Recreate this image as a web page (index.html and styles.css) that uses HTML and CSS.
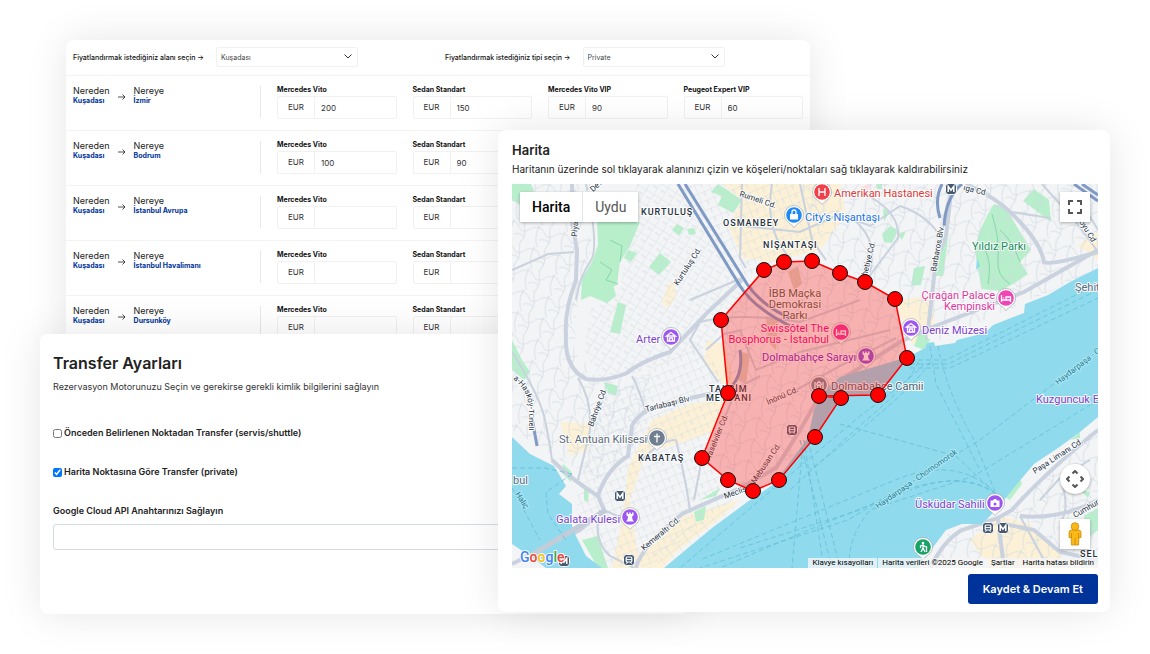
FILE: index.html
```html
<!DOCTYPE html>
<html lang="tr">
<head>
    <meta charset="UTF-8">
    <meta name="viewport" content="width=device-width, initial-scale=1.0">
    <title>Transfer Ayarları</title>
    <link rel="stylesheet" href="styles.css">
</head>
<body>
    <main class="stage">

        <!-- Prices -->
        <section class="panel prices">
            <div class="filters">
                <div class="filter">
                    <label for="area">Fiyatlandırmak istediğiniz alanı seçin →</label>
                    <div class="select-wrap">
                        <select id="area"><option>Kuşadası</option></select>
                        <svg class="chevron" viewBox="0 0 8 5"><path d="M.5 .5 4 4 7.5 .5"/></svg>
                    </div>
                </div>
                <div class="filter">
                    <label for="type">Fiyatlandırmak istediğiniz tipi seçin →</label>
                    <div class="select-wrap">
                        <select id="type"><option>Private</option></select>
                        <svg class="chevron" viewBox="0 0 8 5"><path d="M.5 .5 4 4 7.5 .5"/></svg>
                    </div>
                </div>
            </div>

            <div class="price-row">
                <div class="route">
                    <div class="stop">Nereden<b>Kuşadası</b></div>
                    <svg class="arrow" viewBox="0 0 8 6"><path d="M0 3H7M4.500 .5 7 3 4.500 5.500"/></svg>
                    <div class="stop">Nereye<b>İzmir</b></div>
                </div>
                <div class="cars">
                    <div class="car"><label for="p11">Mercedes Vito</label><div class="money"><span>EUR</span><input id="p11" type="text" value="200"></div></div>
                    <div class="car"><label for="p12">Sedan Standart</label><div class="money"><span>EUR</span><input id="p12" type="text" value="150"></div></div>
                    <div class="car"><label for="p13">Mercedes Vito VIP</label><div class="money"><span>EUR</span><input id="p13" type="text" value="90"></div></div>
                    <div class="car"><label for="p14">Peugeot Expert VIP</label><div class="money"><span>EUR</span><input id="p14" type="text" value="60"></div></div>
                </div>
            </div>

            <div class="price-row">
                <div class="route">
                    <div class="stop">Nereden<b>Kuşadası</b></div>
                    <svg class="arrow" viewBox="0 0 8 6"><path d="M0 3H7M4.500 .5 7 3 4.500 5.500"/></svg>
                    <div class="stop">Nereye<b>Bodrum</b></div>
                </div>
                <div class="cars">
                    <div class="car"><label for="p21">Mercedes Vito</label><div class="money"><span>EUR</span><input id="p21" type="text" value="100"></div></div>
                    <div class="car"><label for="p22">Sedan Standart</label><div class="money"><span>EUR</span><input id="p22" type="text" value="90"></div></div>
                </div>
            </div>

            <div class="price-row">
                <div class="route">
                    <div class="stop">Nereden<b>Kuşadası</b></div>
                    <svg class="arrow" viewBox="0 0 8 6"><path d="M0 3H7M4.500 .5 7 3 4.500 5.500"/></svg>
                    <div class="stop">Nereye<b>İstanbul Avrupa</b></div>
                </div>
                <div class="cars">
                    <div class="car"><label for="p31">Mercedes Vito</label><div class="money"><span>EUR</span><input id="p31" type="text"></div></div>
                    <div class="car"><label for="p32">Sedan Standart</label><div class="money"><span>EUR</span><input id="p32" type="text"></div></div>
                </div>
            </div>

            <div class="price-row">
                <div class="route">
                    <div class="stop">Nereden<b>Kuşadası</b></div>
                    <svg class="arrow" viewBox="0 0 8 6"><path d="M0 3H7M4.500 .5 7 3 4.500 5.500"/></svg>
                    <div class="stop">Nereye<b>İstanbul Havalimanı</b></div>
                </div>
                <div class="cars">
                    <div class="car"><label for="p41">Mercedes Vito</label><div class="money"><span>EUR</span><input id="p41" type="text"></div></div>
                    <div class="car"><label for="p42">Sedan Standart</label><div class="money"><span>EUR</span><input id="p42" type="text"></div></div>
                </div>
            </div>

            <div class="price-row">
                <div class="route">
                    <div class="stop">Nereden<b>Kuşadası</b></div>
                    <svg class="arrow" viewBox="0 0 8 6"><path d="M0 3H7M4.500 .5 7 3 4.500 5.500"/></svg>
                    <div class="stop">Nereye<b>Dursunköy</b></div>
                </div>
                <div class="cars">
                    <div class="car"><label for="p51">Mercedes Vito</label><div class="money"><span>EUR</span><input id="p51" type="text"></div></div>
                    <div class="car"><label for="p52">Sedan Standart</label><div class="money"><span>EUR</span><input id="p52" type="text"></div></div>
                </div>
            </div>
        </section>

        <!-- Transfer settings -->
        <section class="panel settings">
            <h1>Transfer Ayarları</h1>
            <p>Rezervasyon Motorunuzu Seçin ve gerekirse gerekli kimlik bilgilerini sağlayın</p>
            <div class="check">
                <input type="checkbox" id="shuttle">
                <label for="shuttle">Önceden Belirlenen Noktadan Transfer (servis/shuttle)</label>
            </div>
            <div class="check">
                <input type="checkbox" id="private" checked>
                <label for="private">Harita Noktasına Göre Transfer (private)</label>
            </div>
            <label class="key-label" for="api-key">Google Cloud API Anahtarınızı Sağlayın</label>
            <input class="key-input" type="text" id="api-key">
        </section>

        <!-- Map -->
        <section class="panel map-panel">
            <h2>Harita</h2>
            <p>Haritanın üzerinde sol tıklayarak alanınızı çizin ve köşeleri/noktaları sağ tıklayarak kaldırabilirsiniz</p>

            <div class="map">
                <svg class="map-canvas" viewBox="512 184 586 384">
                    <defs>
                        <pattern id="grid-a" width="9" height="13" patternUnits="userSpaceOnUse" patternTransform="rotate(32)"><path class="street" d="M0 0H9M0 0V13M4 6H9"/></pattern>
                        <pattern id="grid-b" width="14" height="9" patternUnits="userSpaceOnUse" patternTransform="rotate(-22)"><path class="street" d="M0 0H14M0 0V9M7 0V5"/></pattern>
                        <pattern id="grid-c" width="26" height="22" patternUnits="userSpaceOnUse" patternTransform="rotate(14)"><path class="street" d="M0 4Q9 0 13 7T26 4M6 2Q3 12 9 22M6 0V3M18 6Q22 13 17 22M17 0 18 6M9 15Q14 11 20 15"/></pattern>
                        <pattern id="grid-d" width="11" height="8" patternUnits="userSpaceOnUse" patternTransform="rotate(-38)"><path class="street" d="M0 0H11M0 0V8"/></pattern>
                        <symbol id="pin" viewBox="-11 -11 22 26" overflow="visible">
                            <path d="M0 12.500C-2 9-9.500 7-9.500 0A9.500 9.500 0 0 1 9.500 0C9.500 7 2 9 0 12.500Z" fill="#fff" stroke="#9aa0a6" stroke-width=".6"/>
                            <circle r="7.800" fill="currentColor"/>
                        </symbol>
                        <symbol id="metro" viewBox="-6 -6 12 12" overflow="visible">
                            <rect x="-5.500" y="-5.500" width="11" height="11" rx="3" fill="#455a70" stroke="#fff"/>
                            <path d="M-2.800 3V-2.600L0 1.200 2.800-2.600V3" fill="none" stroke="#fff" stroke-width="1.500"/>
                        </symbol>
                        <symbol id="tram" viewBox="-6 -6 12 12" overflow="visible">
                            <rect x="-5.500" y="-5.500" width="11" height="11" rx="3" fill="#455a70" stroke="#fff"/>
                            <rect x="-2.800" y="-3" width="5.600" height="5" rx="1" fill="none" stroke="#fff" stroke-width="1.200"/>
                            <path d="M-2.800-.4H2.800M-2.500 3.800-1.500 2M2.500 3.800 1.500 2" stroke="#fff"/>
                        </symbol>
                        <path id="tunnel" d="M513 379Q528 390 529 409V442"/>
                    </defs>

                    <!-- land -->
                    <rect x="512" y="184" width="586" height="384" fill="#f3f4f5"/>
                    <g fill="#fcf1d6">
                        <path d="M722 184H840L846 214 820 250 772 262 742 258 728 226 742 200Z"/>
                        <path d="M668 284 674 282 676 296 669 308 662 304Z"/>
                        <path d="M707 340 724 344 734 380 728 390 704 362Z"/>
                        <path d="M652 420 690 404 728 398 712 432 676 444 646 452 630 500 640 568H612L622 520 628 468Z"/>
                        <path d="M560 422 592 424 588 450 570 456Z"/>
                        <path d="M640 552 684 516 740 500 720 518 676 552 662 568H636Z"/>
                        <path d="M895 300 930 296 936 330 912 345Z"/>
                        <path d="M970 540 1000 516 1030 524 1062 556 1058 568H990Z"/>
                        <path d="M1078 245 1098 232V260Z"/>
                    </g>
                    <g fill="#b7efcb">
                        <path d="M512 184H531L534 192 522 206 512 200Z"/>
                        <path d="M597 222H640L630 246 620 262 617 285 600 292 581 300 582 278 592 262 598 245Z"/>
                        <path d="M582 280H612L616 296 607 303 590 296Z"/>
                        <path d="M618 302 626 305 620 334 610 332Z"/>
                        <path d="M660 253 671 262 659 275 649 267Z"/>
                        <path d="M677 224 684 228 679 236 672 230ZM687 229 694 228 696 234 689 235Z"/>
                        <path d="M718 184 742 200 733 213 718 205 722 196 711 192Z"/>
                        <path d="M628 250 637 253 631 262 624 258Z"/>
                        <path d="M994 204 1004 207 1013 220 1023 237 1031 250 1020 262 1028 274 1013 284 1000 291 982 289 978 270 975 250 979 232 988 214Z"/>
                        <path d="M1034 189 1049 200 1051 222 1023 201Z"/>
                        <path d="M882 234 890 226 898 230 892 243 884 242ZM898 234 906 231 902 240Z"/>
                        <path d="M938 240 948 238 943 276 934 276ZM914 268 925 266 921 285 911 286Z"/>
                        <path d="M876 184H882V189H877ZM883 208 889 212 884 222Z"/>
                        <path d="M512 340 522 360 530 372 524 380 512 370Z"/>
                        <path d="M604 382 618 386 616 396 606 392Z"/>
                        <path d="M563 464 572 472 571 482 561 472Z"/>
                        <path d="M584 488H589L588 502 584 500Z"/>
                        <path d="M582 540 598 536 604 556 608 568H598Z"/>
                        <path d="M694 512 706 506 704 520 696 522ZM700 500 720 488 716 496Z"/>
                        <path d="M920 330 930 340 924 350 914 346Z"/>
                        <path d="M1005 497 1020 478 1022 484 1010 500ZM1084 516 1098 508V530L1088 538Z"/>
                        <path d="M1070 440 1080 432V438ZM1080 490 1090 492 1088 498Z"/>
                    </g>
                    <g fill="#dcd3bd">
                        <path d="M788 272 798 266 802 284 794 290ZM766 316 778 320 776 350 768 342ZM742 352 750 354 746 384 738 380Z"/>
                    </g>
                    <path d="M664 568 690 546 712 534 706 546 684 560ZM872 184H868L860 188 866 192Z" fill="#fbdfe0"/>

                    <!-- side streets -->
                    <path fill="url(#grid-c)" d="M512 184H590L592 260 578 300 574 350 600 382 650 374 640 440 600 480 560 460 512 430ZM800 184H1098V270L940 340 900 300 870 280 830 260ZM930 568 950 530 1000 516 1098 425V568Z"/>
                    <path fill="url(#grid-a)" d="M636 184H690L752 300 700 350 640 372 600 378 584 350 590 310 620 290Z"/>
                    <path fill="url(#grid-b)" d="M690 184H830L820 250 760 268 742 280Z"/>
                    <path fill="url(#grid-b)" d="M600 400 700 340 730 390 700 456 740 494 650 566H600L576 510 580 470Z"/>
                    <path fill="url(#grid-d)" d="M648 560 690 526 744 500 700 540 664 566Z"/>
                    <path fill="url(#grid-c)" d="M764 270 812 261 865 282 895 299 907 358 840 378 815 400 800 450 753 491 702 458 728 393 721 320Z"/>
                    <path class="park-path" d="M600 262 612 270 606 280 618 284M610 240 622 246 620 262M992 214Q1000 240 998 258T1010 284M985 250Q992 262 988 284M1000 230Q1012 240 1020 262"/>

                    <!-- main roads -->
                    <g class="road">
                        <path class="wide" d="M572 184V222L577 250 576 280Q564 312 566 335 564 368 586 379 606 382 627 373 640 362 670 352L707 313 742 280"/>
                        <path d="M586 184Q600 250 590 262 580 276 576 300M512 270 548 254 574 252M512 352Q540 396 545 420T552 460M578 378Q592 400 590 430L578 480"/>
                        <path class="wide" d="M552 460Q572 480 598 496L604 510 580 530 512 564M598 496Q606 470 628 456L632 426Q638 412 660 406L690 398 728 390"/>
                        <path d="M640 462Q660 440 676 440M632 376Q640 390 646 414M600 510Q592 540 610 556L634 568M604 510 626 520"/>
                        <path class="wide" d="M636 568Q640 548 682 514L740 488 776 468 800 430 822 392 900 342 930 328 1024 292 1098 250"/>
                        <path d="M700 322 690 340 718 382M706 350 724 334 742 330M742 184 740 258 746 268M690 300 742 278"/>
                        <path d="M772 184Q764 230 790 258M742 226 800 232 840 214 870 226 900 206M800 184 812 240 826 260"/>
                        <path d="M846 214Q880 236 870 272M872 198Q900 214 898 238L868 278M900 206Q930 216 942 240L934 276 926 340"/>
                        <path class="wide" d="M952 184 946 236 936 260 928 330M966 184Q996 198 1010 212 1040 240 1044 262 1050 266 1098 252"/>
                        <path d="M1042 184 1076 222 1098 252M1030 320 1098 296M1080 200 1098 230M1012 212 1050 218"/>
                        <path class="wide" d="M1098 430Q1044 474 1012 510L998 518 962 530Q944 540 930 568"/>
                        <path class="wide" d="M998 518 1004 568M1004 524 1034 530 1060 552 1098 560M1020 516Q1060 520 1098 500"/>
                        <path d="M1040 500 1060 478 1090 460M1020 516 1044 560M1060 478Q1070 506 1062 520"/>
                        <path d="M700 322Q740 312 800 322L860 300M740 330 756 370 800 352 890 330M770 404Q800 388 840 366L896 338M728 393 760 376M732 400Q720 430 706 456M676 440Q688 490 690 512M702 458 694 500"/>
                    </g>
                    <g class="highway">
                        <path d="M678 184 740 286Q754 308 790 326M685 184 747 284Q762 306 790 318"/>
                        <path d="M942 184Q934 200 940 218M962 184Q946 196 944 226"/>
                        <path d="M1074 184 1098 201M1082 184 1098 195M532 418 537 446M728 390Q744 376 740 350"/>
                    </g>

                    <!-- water -->
                    <g class="water">
                        <path d="M1098 268 1070 282 1048 295 1025 304 1024 313 993 325 985 333 957 340 955 343 935 346 934 342 927 343 925 348 908 357 840 377 824 392 814 410 808 438 790 462 774 484 750 500 712 528 664 568H918L934 546 946 530 962 524 982 524 998 508 1012 490 1034 464 1058 448 1080 432 1098 417Z"/>
                        <path d="M512 437 530 454 554 466 566 486 559 494 572 504 572 526 576 536 586 556 602 568H546L530 556 512 544Z"/>
                        <path d="M977 258 980 266 976 270Z"/>
                    </g>
                    <path d="M530 556 606 510" stroke="#c3cdda" stroke-width="5"/>
                    <g class="ferry">
                        <path d="M910 360H946L1098 284M910 364H948L1098 290M910 368H950L1098 298M930 346 936 384 980 470M938 346Q946 390 974 440L996 494"/>
                        <path d="M924 364Q910 380 860 416L760 500 680 568M918 362Q910 384 866 420L790 490M930 362Q916 388 810 470"/>
                        <path d="M800 440 830 560M804 440 824 568M808 440 840 568M802 454 792 568M840 424 956 456 996 494M1098 350 980 440 848 520 700 568"/>
                        <path d="M996 494Q960 456 900 478L700 560M996 494Q970 474 930 484T720 568M996 494Q950 462 860 510L740 548M1098 400 974 476 870 510Q846 540 850 568"/>
                        <path d="M512 468H545L572 474M572 474 546 492 548 514 566 540M512 488 540 540"/>
                    </g>

                    <!-- street names -->
                    <g class="road-name">
                        <text transform="translate(739 196) rotate(19)">Rumeli Cd.</text>
                        <text transform="translate(577 237) rotate(-86)">Piyale</text>
                        <text transform="translate(582 202) rotate(-42)">Civ. Devri</text>
                        <text transform="translate(678 286) rotate(-57)">Kurtuluş Cd.</text>
                        <text transform="translate(936 272) rotate(-80)">Barbaros Blv.</text>
                        <text transform="translate(867 276) rotate(-76)">hetiye Cd.</text>
                        <text transform="translate(963 190) rotate(13)">ıga Cd.</text>
                        <text transform="translate(1079 222) rotate(58)">oyu Cd</text>
                        <text transform="translate(646 412) rotate(-14)">Tarlabaşı Blv</text>
                        <text transform="translate(593 427) rotate(-70)">Bahriye Cd.</text>
                        <text transform="translate(768 405) rotate(-24)">İnönü Cd.</text>
                        <text transform="translate(711 458) rotate(-68)">raselviler Cd.</text>
                        <text transform="translate(725 499) rotate(-20)">Meclis</text>
                        <text transform="translate(755 484) rotate(-56)">Mebusan Cd.</text>
                        <text transform="translate(644 551) rotate(-40)">Kemeraltı Cd.</text>
                        <text transform="translate(1035 474) rotate(-33)">Paşa Limanı Cd.</text>
                        <text transform="translate(1075 518) rotate(-30)">Cumhur</text>
                        <text><textPath href="#tunnel">a-Hasköy-Tüneli</textPath></text>
                    </g>
                    <g class="sea-name">
                        <text transform="translate(878 509) rotate(-35)">Haydarpaşa - Chornomorsk</text>
                        <text transform="translate(1058 385) rotate(-38)">Haydarpaşa - C</text>
                        <text transform="translate(515 494) rotate(58)">Haliç</text>
                    </g>

                    <!-- districts -->
                    <g class="district">
                        <text x="641" y="215">KURTULUŞ</text>
                        <text x="723" y="226">OSMANBEY</text>
                        <text x="763" y="248">NİŞANTAŞI</text>
                        <text x="638" y="461">KABATAŞ</text>
                        <text x="709" y="392">TAKSİM</text>
                        <text x="706" y="401">MEYDANI</text>
                        <text x="1080" y="557">SEL</text>
                    </g>

                    <!-- places -->
                    <g class="place">
                        <text x="834" y="197" fill="#d93a3a">Amerikan Hastanesi</text>
                        <text x="805" y="221" fill="#1a73e8">City's Nişantaşı</text>
                        <text x="972" y="250" fill="#178a5b">Yıldız Parkı</text>
                        <text x="636" y="343" fill="#7b3fd0">Arter</text>
                        <text x="995" y="299" fill="#e0359e" text-anchor="end">Çırağan Palace</text>
                        <text x="995" y="310" fill="#e0359e" text-anchor="end">Kempinski</text>
                        <text x="922" y="334" fill="#7b3fd0">Deniz Müzesi</text>
                        <text x="829" y="332" fill="#f0007c" text-anchor="end">Swissôtel The</text>
                        <text x="829" y="343" fill="#f0007c" text-anchor="end">Bosphorus - İstanbul</text>
                        <text x="762" y="361" fill="#7a20c8">Dolmabahçe Sarayı</text>
                        <text x="831" y="390" fill="#4d5b6c">Dolmabahçe Camii</text>
                        <text x="795" y="297" fill="#4c6048" text-anchor="middle">İBB Maçka</text>
                        <text x="795" y="308" fill="#4c6048" text-anchor="middle">Demokrasi</text>
                        <text x="795" y="319" fill="#4c6048" text-anchor="middle">Parkı</text>
                        <text x="559" y="443" fill="#5d6b7c">St. Antuan Kilisesi</text>
                        <text x="556" y="523" fill="#7b3fd0">Galata Kulesi</text>
                        <text x="915" y="508" fill="#7b3fd0">Üsküdar Sahili</text>
                        <text x="1036" y="403" fill="#7b3fd0">Kuzguncuk E</text>
                        <text x="1075" y="291" fill="#5d6b7c">Şehit</text>
                        <text x="513" y="484" fill="#5d6b7c">bul</text>
                    </g>
                    <g transform="translate(822 192)" color="#f0414b"><use href="#pin" x="-11" y="-11" width="22" height="26"/><path class="glyph" d="M-3-4V4M3-4V4M-3 0H3"/></g>
                    <g transform="translate(794 215)" color="#1e88f5"><use href="#pin" x="-11" y="-11" width="22" height="26"/><path d="M-4-1H4V4.500H-4Z" fill="#fff"/><path class="glyph" d="M-2-1V-3A2 2 0 0 1 2-3V-1"/></g>
                    <g transform="translate(671 337)" color="#9d56f0"><use href="#pin" x="-11" y="-11" width="22" height="26"/><path class="glyph" d="M-4.500-1 0-4.500 4.500-1ZM-3.500-1V4H3.500V-1M-1.500 4V1H1.500V4"/></g>
                    <g transform="translate(911 328)" color="#9d56f0"><use href="#pin" x="-11" y="-11" width="22" height="26"/><path class="glyph" d="M-4.500-1 0-4.500 4.500-1ZM-3.500-1V4H3.500V-1M-1.500 4V1H1.500V4"/></g>
                    <g transform="translate(1006 298)" color="#ef45b5"><use href="#pin" x="-11" y="-11" width="22" height="26"/><path class="glyph" d="M-4.500-3V4M-4.500 2H4.500V-1H0V2M4.500 4V1M-2.500-.5V.5"/></g>
                    <g transform="translate(841 332)" color="#f0309c"><use href="#pin" x="-11" y="-11" width="22" height="26"/><path class="glyph" d="M-4.500-3V4M-4.500 2H4.500V-1H0V2M4.500 4V1M-2.500-.5V.5"/></g>
                    <g transform="translate(866 356)" color="#8f4fd8"><use href="#pin" x="-11" y="-11" width="22" height="26"/><path d="M-3.500-4.500H-2V-3H-.8V-4.500H.8V-3H2V-4.500H3.500V-1.500L2-.5 2.500 2.500 4 4.500H-4L-2.500 2.500-2-.5-3.500-1.500Z" fill="#fff"/></g>
                    <g transform="translate(819 385)" color="#7b8794"><use href="#pin" x="-11" y="-11" width="22" height="26"/><path class="glyph" d="M-4 4V-3M4 4V-3M-4 4H-1.500V1Q0-1 1.500 1V4H4M-2.500 0Q-2-2 0-3.500 2-2 2.500 0"/></g>
                    <g transform="translate(657 438)" color="#6f7f8f"><use href="#pin" x="-11" y="-11" width="22" height="26"/><path class="glyph" d="M0-4.500V4.500M-3-1.500H3"/></g>
                    <g transform="translate(630 517)" color="#9d56f0"><use href="#pin" x="-11" y="-11" width="22" height="26"/><path d="M-3.500-4.500H-2V-3H-.8V-4.500H.8V-3H2V-4.500H3.500V-1.500L2-.5 2.500 2.500 4 4.500H-4L-2.500 2.500-2-.5-3.500-1.500Z" fill="#fff"/></g>
                    <g transform="translate(995 503)" color="#9d56f0"><use href="#pin" x="-11" y="-11" width="22" height="26"/><path d="M-4.500-2.500H-2L-1-4H1L2-2.500H4.500V4H-4.500Z" fill="#fff"/><circle cy="1" r="1.500" fill="#9d56f0"/></g>
                    <g transform="translate(923 547)" color="#17a268"><use href="#pin" x="-11" y="-11" width="22" height="26"/><circle cy="-4" r="1.300" fill="#fff"/><path class="glyph" d="M0-2V1L-2 5M0 1 2 5M-2.500 1V-1L0-2 2.500 0M3.500-1V5"/></g>
                    <g>
                        <use href="#metro" x="945" y="183" width="12" height="12"/>
                        <use href="#metro" x="614" y="490" width="12" height="12"/>
                        <use href="#metro" x="558" y="555" width="12" height="12"/>
                        <use href="#metro" x="997" y="522" width="12" height="12"/>
                        <use href="#tram" x="982" y="522" width="12" height="12"/>
                        <use href="#tram" x="623" y="554" width="12" height="12"/>
                        <use href="#tram" x="786" y="424" width="12" height="12"/>
                    </g>

                    <!-- selected area -->
                    <path class="area" d="M764 270 784 262 812 261 840 273 865 282 895 299 907 358 878 395 819 396 841 398 815 437 779 480 753 491 728 480 702 458 728 393 721 320Z"/>
                    <g class="corner">
                        <circle cx="764" cy="270" r="7.500"/><circle cx="784" cy="262" r="7.500"/><circle cx="812" cy="261" r="7.500"/>
                        <circle cx="840" cy="273" r="7.500"/><circle cx="865" cy="282" r="7.500"/><circle cx="895" cy="299" r="7.500"/>
                        <circle cx="907" cy="358" r="7.500"/><circle cx="878" cy="395" r="7.500"/><circle cx="819" cy="396" r="7.500"/>
                        <circle cx="841" cy="398" r="7.500"/><circle cx="815" cy="437" r="7.500"/><circle cx="779" cy="480" r="7.500"/>
                        <circle cx="753" cy="491" r="7.500"/><circle cx="728" cy="480" r="7.500"/><circle cx="702" cy="458" r="7.500"/>
                        <circle cx="728" cy="393" r="7.500"/><circle cx="721" cy="320" r="7.500"/>
                    </g>
                    <text class="google" x="520" y="562"><tspan fill="#4285f4">G</tspan><tspan fill="#ea4335">o</tspan><tspan fill="#fbbc05">o</tspan><tspan fill="#4285f4">g</tspan><tspan fill="#34a853">l</tspan><tspan fill="#ea4335">e</tspan></text>
                </svg>

                <div class="map-types">
                    <button type="button" class="active">Harita</button>
                    <button type="button">Uydu</button>
                </div>
                <button type="button" class="map-btn fullscreen" aria-label="Tam ekran">
                    <svg width="14" height="14" viewBox="0 0 14 14"><path d="M1 5V1H5M9 1H13V5M13 9V13H9M5 13H1V9"/></svg>
                </button>
                <div class="map-tools">
                    <button type="button" class="map-btn round" aria-label="Kamera">
                        <svg width="18" height="18" viewBox="0 0 18 18"><path d="M6.500 3.500 9 1 11.500 3.500M6.500 14.500 9 17 11.500 14.500M3.500 6.500 1 9 3.500 11.500M14.500 6.500 17 9 14.500 11.500"/></svg>
                    </button>
                    <button type="button" class="map-btn" aria-label="Sokak görünümü">
                        <svg class="pegman" width="14" height="24" viewBox="0 0 14 24"><path d="M3.500 8H10.500Q13 8 13 10.500V15.500H11L10.500 23H3.500L3 15.500H1V10.500Q1 8 3.500 8Z"/><circle cx="7" cy="4.500" r="3.800"/><path d="M7 16V23M3.500 11V16M10.500 11V16"/></svg>
                    </button>
                </div>
                <div class="map-legal">
                    <button type="button">Klavye kısayolları</button>
                    <span>Harita verileri ©2025 Google</span>
                    <a href="#">Şartlar</a>
                    <a href="#">Harita hatası bildirin</a>
                </div>
            </div>

            <button type="submit" class="save">Kaydet &amp; Devam Et</button>
        </section>
    </main>
</body>
</html>
```
FILE: styles.css
```css
* {
    box-sizing: border-box;
}
body {
    margin: 0;
    background: #fff;
    color: #222;
    font-family: Inter, "Liberation Sans", sans-serif;
}
h1, h2, p {
    margin: 0;
}
button, input, select {
    font-family: inherit;
    margin: 0;
}

/* overlapping panels share one grid */
.stage {
    display: grid;
    grid-template-columns: 26px 432fr 192fr 120fr 300fr;
    grid-template-rows: 90px 204px minmax(280px, auto);
    padding: 40px;
}
.panel {
    background: #fff;
    border-radius: 8px;
    box-shadow: 0 0 40px rgba(0, 0, 0, 0.1);
    min-width: 0;
}

/* prices */
.prices {
    grid-column: 2 / 5;
    grid-row: 1 / 4;
    align-self: start;
}
.filters {
    display: grid;
    grid-template-columns: 1fr 1fr;
    padding: 7px 0 8px;
}
.filter {
    display: flex;
    align-items: center;
    gap: 12px;
    padding-left: 7px;
    font-size: 7px;
    font-weight: 500;
    color: #111;
}
.select-wrap {
    position: relative;
    width: 142px;
}
.select-wrap select {
    width: 100%;
    height: 20px;
    padding: 0 4px;
    border: 1px solid #f1f1f1;
    border-radius: 2px;
    background: #fff;
    color: #444;
    font-size: 7px;
    appearance: none;
}
.chevron {
    position: absolute;
    right: 6px;
    top: 7px;
    width: 8px;
    height: 5px;
    overflow: visible;
    fill: none;
    stroke: #333;
    pointer-events: none;
}
.price-row {
    display: flex;
    height: 55px;
    padding: 10px 7px 12px;
    border-top: 1px solid #f3f3f3;
}
.route {
    display: flex;
    flex: none;
    width: 188px;
    gap: 8px;
    border-right: 1px solid #e8e8e8;
}
.stop {
    font-size: 9px;
    line-height: 10px;
}
.stop b {
    display: block;
    color: #003399;
    font-size: 7px;
    font-weight: 700;
}
.arrow {
    width: 8px;
    height: 6px;
    margin-top: 8px;
    fill: none;
    stroke: #222;
    stroke-width: 0.8;
}
.cars {
    display: grid;
    flex: 1;
    grid-template-columns: repeat(4, minmax(0, 1fr));
    gap: 16px;
    min-width: 0;
    padding-left: 16px;
}
.car label {
    display: block;
    color: #111;
    font-size: 7px;
    font-weight: 700;
    line-height: 8px;
    margin-bottom: 2px;
}
.money {
    display: flex;
    height: 23px;
    border: 1px solid #f1f1f1;
    border-radius: 2px;
    color: #333;
    font-size: 8px;
}
.money span {
    flex: none;
    width: 37px;
    border-right: 1px solid #f1f1f1;
    line-height: 21px;
    text-align: center;
}
.money input {
    flex: 1;
    min-width: 0;
    padding: 0 6px;
    border: 0;
    background: transparent;
    color: #333;
    font-size: 8px;
}

/* settings */
.settings {
    grid-column: 1 / 4;
    grid-row: 3;
    padding: 18px 13px;
    z-index: 1;
}
.settings h1 {
    font-size: 16px;
    font-weight: 600;
    line-height: 22px;
}
.settings p {
    margin: 6px 0 33px;
    color: #333;
    font-size: 9px;
    line-height: 14px;
}
.check {
    display: flex;
    align-items: center;
    gap: 2px;
    height: 12px;
    margin-bottom: 27px;
}
.check input {
    width: 9px;
    height: 9px;
}
.check label, .key-label {
    font-size: 9px;
    font-weight: 600;
    line-height: 12px;
}
.key-label {
    display: block;
    margin-bottom: 7px;
}
.key-input {
    width: 100%;
    height: 26px;
    padding: 0 8px;
    border: 1px solid #d5dae2;
    border-radius: 3px;
    background: #fff;
}

/* map */
.map-panel {
    display: flex;
    flex-direction: column;
    align-self: start;
    grid-column: 3 / 6;
    grid-row: 2 / 4;
    padding: 12px 12px 8px 14px;
    z-index: 2;
}
.map-panel h2 {
    font-size: 13px;
    font-weight: 600;
    line-height: 16px;
}
.map-panel p {
    margin: 4px 0 7px;
    font-size: 10px;
    line-height: 15px;
}
.map {
    position: relative;
    font-family: Roboto, sans-serif;
}
.map-canvas {
    display: block;
    width: 100%;
}
.street {
    fill: none;
    stroke: #cfd8e3;
    stroke-width: 0.7;
}
.road {
    fill: none;
    stroke: #c9d2de;
    stroke-width: 2;
}
.road .wide {
    stroke-width: 4;
}
.park-path {
    fill: none;
    stroke: #7ccfa0;
    stroke-width: 0.8;
}
.highway {
    fill: none;
    stroke: #7f9ac4;
    stroke-width: 3;
}
.water {
    fill: #90daee;
}
.ferry {
    fill: none;
    stroke: #62bfd4;
    stroke-width: 0.8;
    stroke-dasharray: 5 3;
}
.map-canvas text {
    paint-order: stroke;
    stroke: rgba(255, 255, 255, 0.9);
    stroke-width: 2;
    stroke-linejoin: round;
}
.road-name {
    fill: #263445;
    font-size: 8px;
}
.map-canvas .sea-name text {
    fill: #12809a;
    font-size: 8px;
    stroke: #b5e7f3;
}
.district {
    fill: #26323f;
    font-size: 9px;
    font-weight: 500;
    letter-spacing: 1px;
}
.place {
    font-size: 11px;
}
.glyph {
    fill: none;
    stroke: #fff;
    stroke-width: 1.3;
}
.area {
    fill: #ff2a24;
    fill-opacity: 0.33;
    stroke: #f00;
    stroke-width: 1.5;
}
.corner {
    fill: #f00;
    stroke: #111;
}
.map-canvas .google {
    font-size: 14px;
    font-weight: 500;
}
.map-types {
    position: absolute;
    top: 8px;
    left: 8px;
    display: flex;
    box-shadow: 0 1px 3px rgba(0, 0, 0, 0.3);
}
.map-types button {
    height: 30px;
    padding: 0 12px;
    border: 0;
    background: #fff;
    color: #565656;
    font-size: 14px;
}
.map-types .active {
    border-right: 1px solid #e6e6e6;
    color: #000;
    font-weight: 500;
}
.map-btn {
    display: flex;
    align-items: center;
    justify-content: center;
    width: 30px;
    height: 30px;
    padding: 0;
    border: 0;
    background: #fff;
    box-shadow: 0 1px 3px rgba(0, 0, 0, 0.3);
}
.map-btn svg {
    fill: none;
    stroke: #555;
    stroke-width: 2;
}
.map-btn .pegman {
    fill: #fbb917;
    stroke: #c98a10;
    stroke-width: 0.8;
}
.round {
    border-radius: 50%;
}
.fullscreen {
    position: absolute;
    top: 8px;
    right: 8px;
}
.map-tools {
    position: absolute;
    right: 8px;
    bottom: 19px;
    display: flex;
    flex-direction: column;
    gap: 25px;
}
.map-legal {
    position: absolute;
    right: 0;
    bottom: 0;
    display: flex;
    font-size: 8px;
    line-height: 10px;
}
.map-legal > * {
    padding: 0 4px;
    border: 0;
    background: rgba(245, 245, 245, 0.8);
    color: #000;
    font: inherit;
    text-decoration: none;
}
.map-legal button {
    margin-right: 1px;
}
.save {
    align-self: flex-end;
    height: 30px;
    margin-top: 6px;
    padding: 0 15px;
    border: 0;
    border-radius: 3px;
    background: #003399;
    color: #fff;
    font-size: 11px;
    font-weight: 600;
}
```
